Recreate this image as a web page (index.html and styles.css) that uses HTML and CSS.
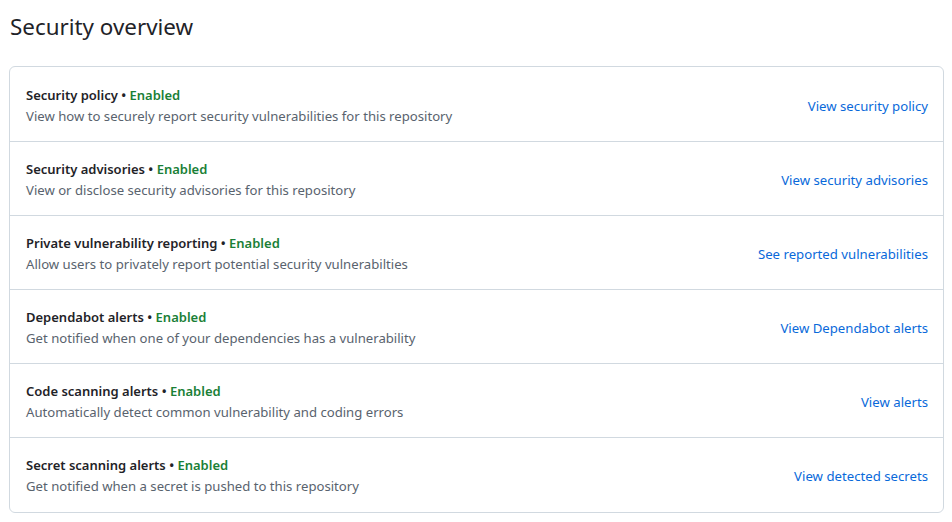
FILE: index.html
```html
<!DOCTYPE html>
<html>
<head>
<meta charset="utf-8">
<link rel="stylesheet" href="styles.css">
</head>
<body>
<h1 class="title">Security overview</h1>
<div class="box">
  <div class="row">
    <div class="info">
      <div class="name">Security policy • <span class="ok">Enabled</span></div>
      <div class="desc">View how to securely report security vulnerabilities for this repository</div>
    </div>
    <a class="link" href="#">View security policy</a>
  </div>
  <div class="row">
    <div class="info">
      <div class="name">Security advisories • <span class="ok">Enabled</span></div>
      <div class="desc">View or disclose security advisories for this repository</div>
    </div>
    <a class="link" href="#">View security advisories</a>
  </div>
  <div class="row">
    <div class="info">
      <div class="name">Private vulnerability reporting • <span class="ok">Enabled</span></div>
      <div class="desc">Allow users to privately report potential security vulnerabilties</div>
    </div>
    <a class="link" href="#">See reported vulnerabilities</a>
  </div>
  <div class="row">
    <div class="info">
      <div class="name">Dependabot alerts • <span class="ok">Enabled</span></div>
      <div class="desc">Get notified when one of your dependencies has a vulnerability</div>
    </div>
    <a class="link" href="#">View Dependabot alerts</a>
  </div>
  <div class="row">
    <div class="info">
      <div class="name">Code scanning alerts • <span class="ok">Enabled</span></div>
      <div class="desc">Automatically detect common vulnerability and coding errors</div>
    </div>
    <a class="link" href="#">View alerts</a>
  </div>
  <div class="row">
    <div class="info">
      <div class="name">Secret scanning alerts • <span class="ok">Enabled</span></div>
      <div class="desc">Get notified when a secret is pushed to this repository</div>
    </div>
    <a class="link" href="#">View detected secrets</a>
  </div>
</div>
</body>
</html>
```

FILE: styles.css
```css
html, body {
  margin: 0;
  background: #ffffff;
}
body {
  padding: 0 8px 0 9px;
  font-family: "Noto Sans", "Open Sans", sans-serif;
  color: #1f2328;
  font-size: 13.15px;
}
.title {
  margin: 0;
  padding-top: 11px;
  height: 66px;
  box-sizing: border-box;
  font-size: 22.4px;
  font-weight: 400;
  line-height: 32px;
  padding-left: 1px;
}
.box {
  border: 1px solid #d1d9e0;
  border-radius: 6px;
}
.row {
  display: flex;
  align-items: center;
  justify-content: space-between;
  padding: 17px 15px 14px 16px;
  border-top: 1px solid #d1d9e0;
}
.row:first-child {
  border-top: none;
  padding-top: 18px;
}
.row:last-child {
  padding-bottom: 15px;
}
.name {
  font-weight: 600;
  font-size: 13px;
  line-height: 21px;
}
.ok {
  color: #1a7f37;
}
.desc {
  color: #59636e;
  line-height: 21px;
}
.link {
  color: #0969da;
  text-decoration: none;
  line-height: 21px;
  font-size: 13.2px;
}
```
